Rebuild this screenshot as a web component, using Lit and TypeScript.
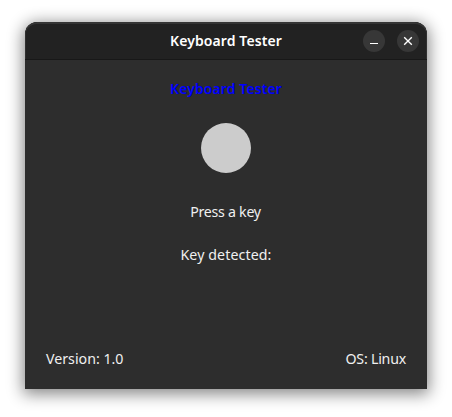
import { LitElement, html, css, svg } from "lit";
import { customElement } from "lit/decorators.js";

@customElement("app-root")
export class AppRoot extends LitElement {
  static styles = css`
    :host { display: block; box-sizing: border-box; height: 417px; padding: 22px 25px 28px; background: #fff; overflow: hidden;
      font-family: "Noto Sans", "Open Sans", sans-serif; font-size: 14.2px; line-height: 20px; color: #f0f0f0; }
    .window { box-sizing: border-box; height: 367px; display: flex; flex-direction: column; background: #2d2d2d;
      border-radius: 12px 12px 0 0; overflow: hidden; box-shadow: 0 3px 16px 2px rgba(0,0,0,.48); }
    .bar { box-sizing: border-box; height: 38px; flex: none; display: grid; grid-template-columns: 1fr auto 1fr; align-items: center;
      background: #222; border-bottom: 1px solid #181818; border-radius: 12px 12px 0 0;
      box-shadow: inset 0 2px 0 #353535, inset 1px 0 0 #303030, inset -1px 0 0 #303030; }
    .title { grid-column: 2; font-weight: 600; font-size: 14px; letter-spacing: .1px; white-space: nowrap; color: #fff; }
    .controls { display: flex; justify-content: flex-end; gap: 12px; padding-right: 8px; }
    button { width: 22px; height: 22px; padding: 0; border: 0; border-radius: 50%; background: #373737; display: block; }
    svg { display: block; width: 22px; height: 22px; fill: none; stroke: #fff; }
    .body { flex: 1; display: flex; flex-direction: column; align-items: center; padding: 19px 21px 20px; }
    .heading { color: #0000ff; font-weight: 600; font-size: 14px; letter-spacing: .1px; white-space: nowrap; }
    .light { width: 50px; height: 50px; border-radius: 50%; background: #ccc; margin: 24px 0 29px; flex: none; }
    .prompt { letter-spacing: -.27px; margin-right: 1px; }
    .detected { margin-top: 23px; letter-spacing: .1px; }
    .os { letter-spacing: -.22px; }
    .footer { margin-top: auto; width: 100%; display: flex; justify-content: space-between; }
  `;
  render() {
    return html`<div class="window">
      <div class="bar">
        <span class="title">Keyboard Tester</span>
        <div class="controls">
          <button aria-label="Minimize"><svg viewBox="0 0 22 22">${svg`<path d="M7 13.5h8" />`}</svg></button>
          <button aria-label="Close"><svg viewBox="0 0 22 22">${svg`<path d="M7.2 7.2l7.6 7.6m0-7.6l-7.6 7.6" stroke-width="1.35" />`}</svg></button>
        </div>
      </div>
      <div class="body">
        <span class="heading">Keyboard Tester</span>
        <div class="light"></div>
        <span class="prompt">Press a key</span>
        <span class="detected">Key detected:</span>
        <div class="footer"><span class="version">Version: 1.0</span><span class="os">OS: Linux</span></div>
      </div>
    </div>`;
  }
}
